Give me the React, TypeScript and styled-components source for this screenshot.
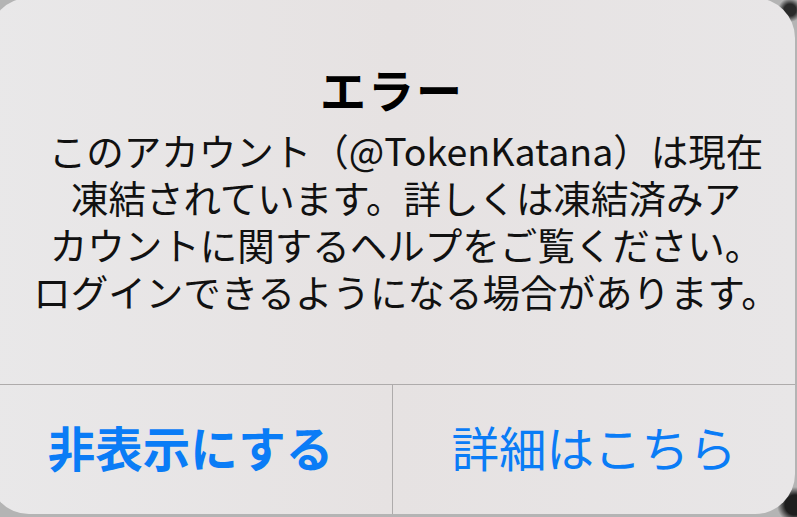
import React from 'react';
import styled, { createGlobalStyle } from 'styled-components';

const GlobalStyle = createGlobalStyle`
  html, body {
    margin: 0;
    padding: 0;
    width: 797px;
    height: 517px;
    overflow: hidden;
  }
  body {
    font-family: "Noto Sans CJK JP", "Noto Sans", sans-serif;
    background: #a9a9a9;
  }
`;

const iosBlue = '#0a7cf6';

const Backdrop = styled.div`
  width: 797px;
  height: 517px;
  overflow: hidden;
  background:
    radial-gradient(circle at 790px 10px, #2a2a2a 0, #2a2a2a 6px, transparent 12px),
    radial-gradient(circle at 795px 505px, #1e1e1e 0, #1e1e1e 10px, transparent 18px),
    #b4b4b4;
`;

const AlertPanel = styled.div`
  margin: -2px 0 0 -11px;
  width: 806px;
  height: 516px;
  border-radius: 40px;
  background: linear-gradient(90deg, #e9e8e9 0%, #e6e2e2 50%, #e8e6e7 100%);
  display: flex;
  flex-direction: column;
  overflow: hidden;
`;

const Content = styled.div`
  height: 386px;
  box-sizing: border-box;
  padding-top: 62px;
  display: flex;
  flex-direction: column;
  align-items: center;
  gap: 10px;
`;

const Title = styled.h1`
  margin: 0;
  font-size: 46px;
  line-height: 56px;
  font-weight: 700;
  color: #000;
  letter-spacing: 2px;
`;

const Message = styled.div`
  padding-left: 28px;
  display: flex;
  flex-direction: column;
  align-items: center;
`;

const MessageLine = styled.span`
  display: block;
  height: 47px;
  font-size: 37.5px;
  line-height: 47px;
  font-weight: 400;
  color: #111;
  white-space: nowrap;
`;

const Actions = styled.div`
  flex: 1;
  display: grid;
  grid-template-columns: 403px 1fr;
  border-top: 1.5px solid #aeabab;
`;

const ActionButton = styled.button<{ $bold?: boolean; $divider?: boolean }>`
  border: none;
  border-left: ${p => (p.$divider ? '1.5px solid #aeabab' : 'none')};
  background: transparent;
  padding: 0 0 6px;
  font-family: "Noto Sans CJK JP", "Noto Sans", sans-serif;
  font-size: 47.5px;
  font-weight: ${p => (p.$bold ? 700 : 400)};
  color: ${iosBlue};
  display: flex;
  align-items: center;
  justify-content: center;
  cursor: pointer;
`;

const lines = [
  'このアカウント（@TokenKatana）は現在',
  '凍結されています。詳しくは凍結済みア',
  'カウントに関するヘルプをご覧ください。',
  'ログインできるようになる場合があります。',
];

export default function App() {
  return (
    <>
      <GlobalStyle />
      <Backdrop>
        <AlertPanel>
          <Content>
            <Title>エラー</Title>
            <Message>
              {lines.map(l => (
                <MessageLine key={l}>{l}</MessageLine>
              ))}
            </Message>
          </Content>
          <Actions>
            <ActionButton $bold>非表示にする</ActionButton>
            <ActionButton $divider>詳細はこちら</ActionButton>
          </Actions>
        </AlertPanel>
      </Backdrop>
    </>
  );
}
